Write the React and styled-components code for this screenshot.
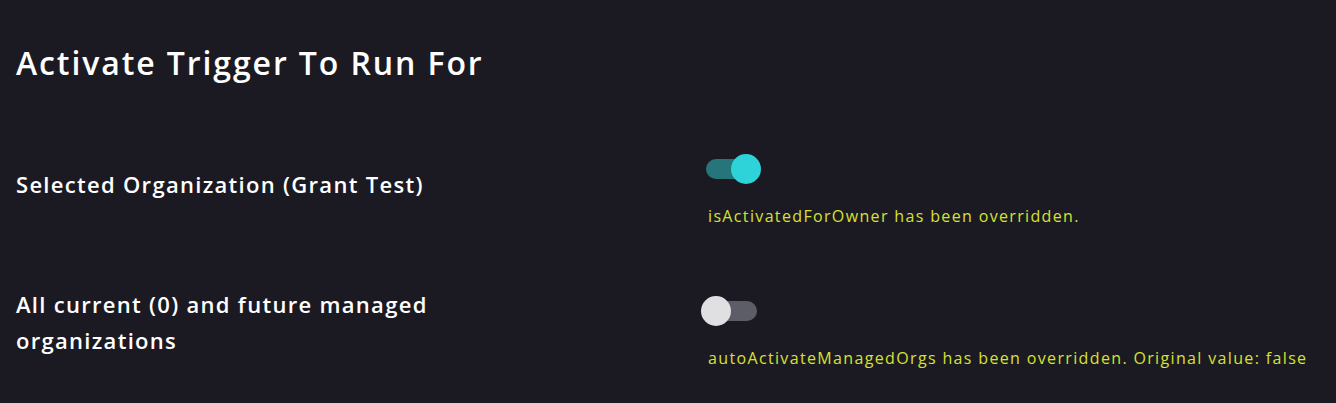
import React from 'react';
import styled, { createGlobalStyle } from 'styled-components';

const GlobalStyle = createGlobalStyle`
  html, body {
    margin: 0;
    padding: 0;
    background: #1b1a23;
  }
  body {
    font-family: "Open Sans", "Noto Sans", sans-serif;
    color: #ffffff;
  }
`

const Page = styled.div`
  width: 1336px;
  height: 403px;
  box-sizing: border-box;
  padding: 37px 16px 0 16px;
  background: #1b1a23;
  overflow: hidden;
`

const Title = styled.h1`
  margin: 0 0 65px 0;
  font-size: 32px;
  font-weight: 600;
  line-height: 52px;
  letter-spacing: 1.9px;
  color: #ffffff;
`

const Row = styled.div`
  display: grid;
  grid-template-columns: 690px 1fr;
  align-items: center;
  margin-bottom: ${props => props.gap || 0}px;
`

const Label = styled.div`
  font-size: 22px;
  font-weight: 600;
  line-height: 36px;
  letter-spacing: 1.3px;
  max-width: 440px;
  padding-bottom: ${props => props.lift || 14}px;
  color: #ffffff;
`

const Control = styled.div`
  display: flex;
  flex-direction: column;
  align-items: flex-start;
`

const Track = styled.div`
  position: relative;
  width: 51px;
  height: 20px;
  margin: 5px 0;
  border-radius: 10px;
  background: ${props => props.on ? '#26757b' : '#5d5d68'};
`

const Knob = styled.div`
  position: absolute;
  top: -5px;
  left: ${props => props.on ? '25px' : '-5px'};
  width: 30px;
  height: 30px;
  border-radius: 50%;
  background: ${props => props.on ? '#2ed3d9' : '#e0e0e2'};
`

const Note = styled.div`
  margin-top: 21px;
  margin-left: 2px;
  font-size: 16px;
  line-height: 22px;
  letter-spacing: 1.35px;
  color: #d8e030;
`

const Toggle = ({ on }) => (
  <Track on={on ? 1 : 0}>
    <Knob on={on ? 1 : 0} />
  </Track>
)

export default function App() {
  return (
    <>
      <GlobalStyle />
      <Page>
        <Title>Activate Trigger To Run For</Title>
        <Row gap={59}>
          <Label>Selected Organization (Grant Test)</Label>
          <Control>
            <Toggle on />
            <Note>isActivatedForOwner has been overridden.</Note>
          </Control>
        </Row>
        <Row>
          <Label lift={20}>All current (0) and future managed organizations</Label>
          <Control>
            <Toggle />
            <Note>autoActivateManagedOrgs has been overridden. Original value: false</Note>
          </Control>
        </Row>
      </Page>
    </>
  );
}
